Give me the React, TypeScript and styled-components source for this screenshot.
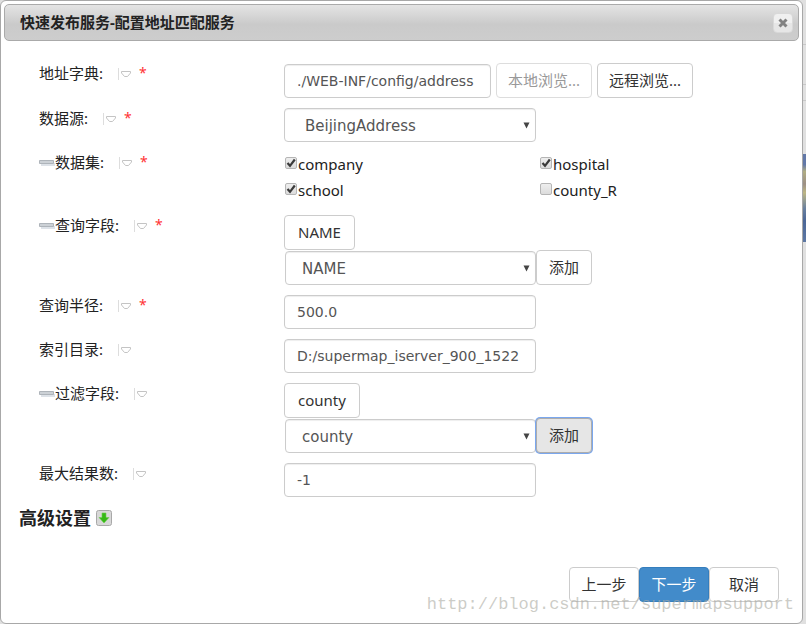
import React from "react";
import styled, { createGlobalStyle, css } from "styled-components";

const GlobalStyle = createGlobalStyle`
  *, *::before, *::after { box-sizing: border-box; }
  html, body, #root { height: 100%; }
  body {
    margin: 0;
    background: #e0e0e0;
    color: #222;
    font-family: "Noto Sans", "Noto Sans CJK SC", sans-serif;
    font-size: 15px;
    line-height: 20px;
  }
  button, input, select { font-family: inherit; margin: 0; }
`;

const Page = styled.div`
  position: relative;
  display: flex;
  min-height: 100%;
`;

const Dialog = styled.section`
  flex: 1;
  min-width: 0;
  display: flex;
  flex-direction: column;
  padding: 3px;
  background: #fff;
  border: 1px solid #a8a8a8;
  border-radius: 6px;
`;

const Backdrop = styled.div`
  width: 3px;
  display: flex;
  flex-direction: column;
`;

const BackdropBand = styled.div<{ $height: number }>`
  height: ${(p) => p.$height}px;
  border-bottom: 1px solid #c8c8c8;
`;

const MapEdge = styled.div`
  height: 88px;
  margin-top: 53px;
  background: linear-gradient(#6278a8 0 12%, #b0ad83 20%, #9c8f85 34%, #bdb684 44%, #69809f 62%, #4c6797 76%, #5d78a4);
`;

const TitleBar = styled.header`
  display: flex;
  align-items: center;
  justify-content: space-between;
  height: 37px;
  padding: 0 5px 0 15px;
  border: 1px solid #aaa;
  border-radius: 5px;
  background: linear-gradient(#e4e4e4, #cacaca 55%, #cdcdcd);
`;

const Title = styled.h1`
  margin: 0;
  padding-bottom: 2px;
  font-size: 15px;
  font-weight: 700;
  line-height: 20px;
`;

const CloseButton = styled.button`
  display: grid;
  place-items: center;
  width: 20px;
  height: 20px;
  padding: 0;
  border: 1px solid #d9d9d9;
  border-radius: 4px;
  background: linear-gradient(#f0f0f0 50%, #e6e6e6 50%);
`;

const Form = styled.form`
  flex: 1;
  display: flex;
  flex-direction: column;
  padding: 22px 20px 18px 15px;
`;

const Row = styled.div`
  display: grid;
  grid-template-columns: 245px 1fr;
  align-items: start;
  margin-bottom: 10px;
  padding-left: 20px;
`;

const LabelCell = styled.div`
  display: flex;
  align-items: center;
  height: 20px;
`;

const Marker = styled.svg`
  margin: 2px 16px 0 14px;
`;

const Required = styled.span`
  margin-left: -8px;
  color: #f33;
  font-size: 14px;
`;

const Stack = styled.div`
  display: flex;
  flex-direction: column;
  align-items: flex-start;
`;

const Inline = styled.div<{ $gap?: number }>`
  display: flex;
  align-items: flex-end;
  gap: ${(p) => p.$gap ?? 0}px;
`;

const control = css`
  height: 34px;
  border: 1px solid #ccc;
  border-radius: 4px;
  background: #fff;
  color: #555;
  box-shadow: inset 0 1px 1px rgba(0, 0, 0, 0.07);
`;

const TextInput = styled.input<{ $width?: number }>`
  ${control}
  width: ${(p) => p.$width ?? 252}px;
  padding: 0 12px;
  font-family: "DejaVu Sans", sans-serif;
  font-size: 14px;
`;

const SelectBox = styled.div<{ $width: number }>`
  display: grid;
  width: ${(p) => p.$width}px;
  margin-left: ${(p) => 252 - p.$width}px;
  > * { grid-area: 1 / 1; }
  > svg { place-self: center end; margin-right: 6px; pointer-events: none; }
`;

const Select = styled.select<{ $indent: number }>`
  ${control}
  appearance: none;
  width: 100%;
  padding: 2px 20px 0 ${(p) => p.$indent}px;
  font-size: 15px;
  font-family: "DejaVu Sans", sans-serif;
`;

const Button = styled.button<{ $primary?: boolean; $focused?: boolean; $wide?: boolean; $tag?: boolean }>`
  height: 35px;
  min-width: ${(p) => (p.$wide ? 70 : 56)}px;
  padding: 0 ${(p) => (p.$tag ? 13 : 11)}px 2px;
  border: 1px solid #ccc;
  border-radius: 4px;
  background: #fff;
  color: #333;
  font-size: 15px;
  line-height: 20px;
  white-space: nowrap;
  &:disabled { border-color: #ddd; color: #999; }
  ${(p) => p.$primary && css`background: #428bca; border-color: #357ebd; color: #fff;`}
  ${(p) => p.$focused && css`background: #e6e6e6; border-color: #adadad; box-shadow: 0 0 0 1px #7aa7ee;`}
`;

const Checks = styled.div`
  display: grid;
  grid-template-columns: 255px 1fr;
  grid-auto-rows: 26px;
  align-items: start;
  margin-bottom: 1px;
`;

const CheckLabel = styled.label`
  display: flex;
  align-items: center;
  gap: 1px;
  height: 24px;
  font-size: 15px;
`;

const CheckBox = styled.span`
  display: grid;
  width: 12px;
  height: 12px;
  margin: 0 0 3px 1px;
  > * { grid-area: 1 / 1; }
  > svg { pointer-events: none; opacity: 0; }
  > input:checked + svg { opacity: 1; }
`;

const CheckInput = styled.input`
  appearance: none;
  width: 12px;
  height: 12px;
  border: 1px solid #b5b5b5;
  border-radius: 2px;
  background: linear-gradient(#eee, #dcdcdc);
`;

const Advanced = styled.h2`
  display: flex;
  align-items: center;
  gap: 5px;
  margin: 0;
  font-size: 18px;
  font-weight: 700;
  line-height: 22px;
`;

const ToggleButton = styled.button`
  display: flex;
  padding: 0;
  border: 0;
  background: none;
`;

const Footer = styled.footer`
  display: flex;
  justify-content: flex-end;
  margin-top: auto;
`;

const Watermark = styled.div`
  position: absolute;
  right: 12px;
  bottom: 7px;
  color: rgba(170, 170, 162, 0.6);
  font-family: "Liberation Mono", monospace;
  font-size: 17px;
  line-height: 24px;
  pointer-events: none;
`;

function DropMarker() {
  return (
    <Marker width="14" height="12" viewBox="0 0 14 12" fill="none" aria-hidden="true">
      <path d="M1.5 0v12" stroke="#ddd" />
      <path d="M4.500 3.500h9v1.500L10.500 8.500h-3L4.500 5z" stroke="#c4c4c4" strokeLinejoin="round" />
    </Marker>
  );
}

function Bar() {
  return (
    <svg width="16" height="8" viewBox="0 0 16 8" aria-hidden="true">
      <path d="M2 5h14v3H2z" fill="#dde2e8" />
      <path d="M.5 2.500h14v3h-14z" fill="#ccd1d6" stroke="#aeb4ba" />
    </svg>
  );
}

function Field(props: {
  label: string;
  htmlFor?: string;
  bar?: boolean;
  required?: boolean;
  children: React.ReactNode;
}) {
  return (
    <Row>
      <LabelCell>
        {props.bar && <Bar />}
        <label htmlFor={props.htmlFor}>{props.label}:</label>
        <DropMarker />
        {props.required && <Required>*</Required>}
      </LabelCell>
      {props.children}
    </Row>
  );
}

function DropDown(props: { id: string; value: string; width?: number; indent?: number }) {
  return (
    <SelectBox $width={props.width ?? 252}>
      <Select id={props.id} defaultValue={props.value} $indent={props.indent ?? 16}>
        <option>{props.value}</option>
      </Select>
      <svg width="7" height="7" viewBox="0 0 7 7" aria-hidden="true">
        <path d="M.5.5h6L3.500 6.500z" fill="#444" />
      </svg>
    </SelectBox>
  );
}

function Check(props: { name: string; checked?: boolean }) {
  return (
    <CheckLabel>
      <CheckBox>
        <CheckInput type="checkbox" defaultChecked={props.checked} />
        <svg width="12" height="12" viewBox="0 0 12 12" fill="none" aria-hidden="true">
          <path d="M2.500 6l2.500 2.800L9.800 2.500" stroke="#3a3a3a" strokeWidth="2.200" />
        </svg>
      </CheckBox>
      {props.name}
    </CheckLabel>
  );
}

export default function App() {
  return (
    <>
      <GlobalStyle />
      <Page>
        <Dialog role="dialog" aria-labelledby="title">
          <TitleBar>
            <Title id="title">快速发布服务-配置地址匹配服务</Title>
            <CloseButton type="button" aria-label="关闭">
              <svg width="10" height="10" viewBox="0 0 10 10" aria-hidden="true">
                <path d="M1.500 1.500l7 7M8.500 1.500l-7 7" stroke="#828282" strokeWidth="3" />
              </svg>
            </CloseButton>
          </TitleBar>
          <Form onSubmit={(e) => e.preventDefault()}>
            <Field label="地址字典" htmlFor="dictionary" required>
              <Inline $gap={5}>
                <TextInput id="dictionary" $width={207} defaultValue="./WEB-INF/config/address" />
                <Button type="button" disabled>本地浏览...</Button>
                <Button type="button">远程浏览...</Button>
              </Inline>
            </Field>
            <Field label="数据源" htmlFor="source" required>
              <DropDown id="source" value="BeijingAddress" indent={20} />
            </Field>
            <Field label="数据集" bar required>
              <Checks>
                <Check name="company" checked />
                <Check name="hospital" checked />
                <Check name="school" checked />
                <Check name="county_R" />
              </Checks>
            </Field>
            <Field label="查询字段" htmlFor="query" bar required>
              <Stack>
                <Button type="button" $tag>NAME</Button>
                <Inline>
                  <DropDown id="query" value="NAME" width={251} />
                  <Button type="button">添加</Button>
                </Inline>
              </Stack>
            </Field>
            <Field label="查询半径" htmlFor="radius" required>
              <TextInput id="radius" defaultValue="500.0" />
            </Field>
            <Field label="索引目录" htmlFor="index">
              <TextInput id="index" defaultValue="D:/supermap_iserver_900_1522" />
            </Field>
            <Field label="过滤字段" htmlFor="filter" bar>
              <Stack>
                <Button type="button" $tag>county</Button>
                <Inline>
                  <DropDown id="filter" value="county" width={251} />
                  <Button type="button" $focused>添加</Button>
                </Inline>
              </Stack>
            </Field>
            <Field label="最大结果数" htmlFor="limit">
              <TextInput id="limit" defaultValue="-1" />
            </Field>
            <Advanced>
              高级设置
              <ToggleButton type="button" aria-label="展开高级设置">
                <svg width="16" height="16" viewBox="0 0 16 16" aria-hidden="true">
                  <rect x=".5" y=".5" width="15" height="15" rx="2" fill="#d8d8d8" stroke="#a8a8a8" />
                  <path d="M6 3h4v4.500h3L8 13 3 7.500h3z" fill="#36b816" stroke="#6ccf4e" strokeWidth=".6" />
                </svg>
              </ToggleButton>
            </Advanced>
            <Footer>
              <Button type="button" $wide>上一步</Button>
              <Button type="submit" $primary $wide>下一步</Button>
              <Button type="button" $wide>取消</Button>
            </Footer>
          </Form>
        </Dialog>
        <Backdrop>
          <BackdropBand $height={45} />
          <BackdropBand $height={40} />
          <BackdropBand $height={16} />
          <MapEdge />
        </Backdrop>
        <Watermark>http://blog.csdn.net/supermapsupport</Watermark>
      </Page>
    </>
  );
}
